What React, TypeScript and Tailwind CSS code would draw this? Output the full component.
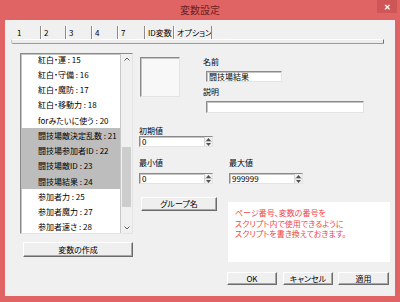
const raised =
  "bg-[#efefef] border border-t-white border-l-white border-r-[#6b6b6b] border-b-[#6b6b6b] shadow-[inset_-1px_-1px_0_#a8a8a8] flex items-center justify-center text-[8px] leading-none text-black";
const sunken =
  "bg-white border border-t-[#8a8a8a] border-l-[#8a8a8a] border-r-[#e4e4e4] border-b-[#e4e4e4] shadow-[inset_1px_1px_0_#c4c4c4]";

const rows: [string, boolean][] = [
  ["紅白・運 : 15", false],
  ["紅白・守備 : 16", false],
  ["紅白・魔防 : 17", false],
  ["紅白・移動力 : 18", false],
  ["forみたいに使う : 20", false],
  ["闘技場敵決定乱数 : 21", true],
  ["闘技場参加者ID : 22", true],
  ["闘技場敵ID : 23", true],
  ["闘技場結果 : 24", true],
  ["参加者力 : 25", false],
  ["参加者魔力 : 27", false],
  ["参加者速さ : 28", false],
];

const tabs = [
  { label: "2", w: "w-[25px]" },
  { label: "3", w: "w-[26px]" },
  { label: "4", w: "w-[26px]" },
  { label: "7", w: "w-[27px]" },
  { label: "ID変数", w: "w-[29px]" },
  { label: "オプション", w: "w-[38px]" },
];

const Spin = () => (
  <div className="ml-auto flex h-full w-[8px] flex-col border-l border-[#d4d4d4] bg-[#f0f0f0]">
    <div className="flex flex-1 items-center justify-center border-b border-[#c4c4c4]">
      <svg width="5" height="3" viewBox="0 0 5 3">
        <path d="M0 3 L2.5 0 L5 3Z" fill="#505050" />
      </svg>
    </div>
    <div className="flex flex-1 items-center justify-center">
      <svg width="5" height="3" viewBox="0 0 5 3">
        <path d="M0 0 L5 0 L2.5 3Z" fill="#505050" />
      </svg>
    </div>
  </div>
);

const NumInput = ({ value }: { value: string }) => (
  <div className={`${sunken} flex h-[11px] w-[74px] items-center`}>
    <span className="pl-[2px] text-[8px] leading-none">{value}</span>
    <Spin />
  </div>
);

const Label = ({ children }: { children: string }) => (
  <div className="h-[10px] text-[8px] leading-[10px] text-black">{children}</div>
);

export default function App() {
  return (
    <div className="flex h-[302px] w-[400px] flex-col bg-[#e16464] font-['Noto_Sans_CJK_JP','Noto_Sans',sans-serif] [font-feature-settings:'palt']">
      {/* title bar */}
      <div className="grid h-[20px] grid-cols-[1fr_auto_1fr] items-start">
        <div />
        <div className="pt-[4px] text-[10px] leading-[12px] text-[#6e1f1f]">変数設定</div>
        <div className="mr-[3px] flex h-[13px] w-[20px] items-center justify-center justify-self-end bg-[#cf5656] text-[8px] font-bold leading-none text-white">
          ✕
        </div>
      </div>

      {/* client */}
      <div className="mx-[5px] mb-[6px] flex flex-1 flex-col bg-[#f0f0f0]">
        {/* tabs */}
        <div className="flex h-[20px] pl-[7px] pt-[6px] text-[8px] leading-[14px] text-black">
          <div className="w-[28px] pl-[5px]">1</div>
          {tabs.map((t) => (
            <div
              key={t.label}
              className={`${t.w} whitespace-nowrap border-l border-[#8a8a8a] pl-[3px] shadow-[inset_1px_0_0_#ffffff]`}
            >
              {t.label}
            </div>
          ))}
          <div className="border-l border-[#8a8a8a]" />
        </div>
        <div className="-mt-[1px] ml-[6px] h-[5px] w-[373px] rounded-bl-[2px] border border-t-white border-l-[#c8c8c8] border-r-[#707070] border-b-[#9a9a9a] bg-[#ececec]" />

        {/* body */}
        <div className="mt-[9px] flex pl-[15px]">
          {/* left column */}
          <div className="flex w-[113px] flex-col">
            <div className={`${sunken} flex h-[181px] overflow-hidden`}>
              <div className="flex-1 overflow-hidden">
                <div className="-mt-[2px]">
                  {rows.map(([text, sel]) => (
                    <div
                      key={text}
                      className={`flex h-[15.25px] items-center whitespace-nowrap pl-[17px] text-[8px] leading-none text-black ${
                        sel ? "bg-[#bdbdbd]" : ""
                      }`}
                    >
                      {text}
                    </div>
                  ))}
                </div>
              </div>
              <div className="flex w-[12px] flex-col items-center border-l border-[#c8c8c8] bg-[#f0f0f0]">
                <div className="flex h-[10px] items-center justify-center">
                  <svg width="6" height="4" viewBox="0 0 6 4">
                    <path d="M0.5 3.5 L3 1 L5.5 3.5" stroke="#606060" fill="none" strokeWidth="1" />
                  </svg>
                </div>
                <div className="mt-[83px] h-[60px] w-[9px] bg-[#cdcdcd]" />
                <div className="mt-auto flex h-[10px] items-center justify-center">
                  <svg width="6" height="4" viewBox="0 0 6 4">
                    <path d="M0.5 0.5 L3 3 L5.5 0.5" stroke="#606060" fill="none" strokeWidth="1" />
                  </svg>
                </div>
              </div>
            </div>
            <div className={`${raised} ml-[3px] mt-[8px] h-[15px] w-[110px]`}>変数の作成</div>
          </div>

          {/* right area */}
          <div className="ml-[6px] flex flex-col">
            <div className="mt-[4px] flex">
              <div className="ml-[1px] h-[40px] w-[40px] border border-t-[#8a8a8a] border-l-[#8a8a8a] border-r-[#e4e4e4] border-b-[#e4e4e4] bg-[#f8f8f8] shadow-[inset_1px_1px_0_#c4c4c4]" />
              <div className="ml-[23px] flex flex-col">
                <Label>名前</Label>
                <div className={`${sunken} ml-[3px] mt-[4px] flex h-[11px] w-[76px] items-center`}>
                  <span className="pl-[2px] text-[8px] leading-none">闘技場結果</span>
                </div>
                <div className="mt-[5px]">
                  <Label>説明</Label>
                </div>
                <div className={`${sunken} ml-[3px] mt-[4px] h-[12px] w-[158px]`} />
              </div>
            </div>

            <div className="mt-[13px]">
              <Label>初期値</Label>
            </div>
            <NumInput value="0" />

            <div className="mt-[11px] flex">
              <div className="flex w-[90px] flex-col">
                <Label>最小値</Label>
                <div className="mt-[5px]">
                  <NumInput value="0" />
                </div>
              </div>
              <div className="flex flex-col">
                <Label>最大値</Label>
                <div className="mt-[5px]">
                  <NumInput value="999999" />
                </div>
              </div>
            </div>

            <div className="mt-[13px] flex">
              <div className="w-[90px]">
                <div className={`${raised} ml-[2px] h-[14px] w-[76px]`}>グループ名</div>
              </div>
              <div className="flex flex-col">
                <div className="-ml-[1px] mt-[5px] h-[60px] w-[162px] bg-white pl-[7px] pt-[6px] text-[8px] leading-[10.5px] text-[#f04848]">
                  <p>ページ番号、変数の番号を</p>
                  <p>スクリプト内で使用できるように</p>
                  <p>スクリプトを書き換えておきます。</p>
                </div>
                <div className="-ml-[2px] mt-[10px] flex">
                  <div className={`${raised} h-[13px] w-[50px]`}>OK</div>
                  <div className={`${raised} ml-[6px] h-[13px] w-[50px]`}>キャンセル</div>
                  <div className={`${raised} ml-[5px] h-[13px] w-[51px]`}>適用</div>
                </div>
              </div>
            </div>
          </div>
        </div>
      </div>
    </div>
  );
}
